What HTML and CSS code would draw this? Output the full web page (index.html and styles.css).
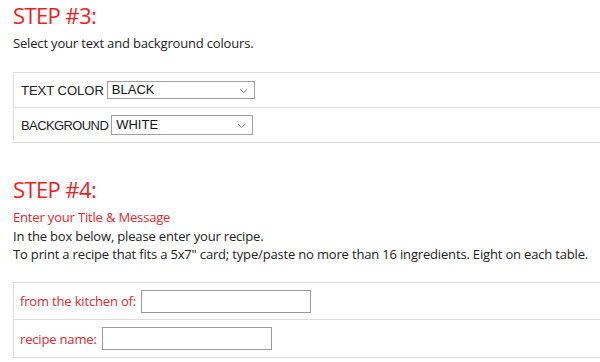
FILE: index.html
```html
<!DOCTYPE html>
<html lang="en">
<head>
    <meta charset="UTF-8">
    <title>Recipe card</title>
    <link rel="stylesheet" href="styles.css">
</head>
<body>
    <!-- Шаг 3: цвета -->
    <h2 class="step-title">STEP #3:</h2>
    <p class="step-text">Select your text and background colours.</p>

    <div class="form-table">
        <div class="form-row colors">
            <label class="field">TEXT COLOR <span class="select-wrap w-text">
                <select>
                    <option>BLACK</option>
                    <option>RED</option>
                    <option>BLUE</option>
                </select>
                <svg class="chevron" width="9" height="6" viewBox="0 0 9 6"><path d="M1 1.2 L4.5 4.5 L8 1.2" fill="none" stroke="#777" stroke-width="1"/></svg>
            </span></label>
        </div>
        <div class="form-row colors">
            <label class="field"><span class="narrow">BACKGROUND</span> <span class="select-wrap w-bg">
                <select>
                    <option>WHITE</option>
                    <option>CREAM</option>
                    <option>GREY</option>
                </select>
                <svg class="chevron" width="9" height="6" viewBox="0 0 9 6"><path d="M1 1.2 L4.5 4.5 L8 1.2" fill="none" stroke="#777" stroke-width="1"/></svg>
            </span></label>
        </div>
    </div>

    <!-- Шаг 4: заголовок и текст -->
    <h2 class="step-title step-four">STEP #4:</h2>
    <p class="step-sub">Enter your Title &amp; Message</p>
    <p class="step-text after-sub">In the box below, please enter your recipe.<br>
    To print a recipe that fits a 5x7" card; type/paste no more than 16 ingredients. Eight on each table.</p>

    <div class="form-table recipe">
        <div class="form-row tall">
            <label class="field red-label">from the kitchen of: <input type="text" class="text-input"></label>
        </div>
        <div class="form-row tall last">
            <label class="field red-label">recipe name: <input type="text" class="text-input"></label>
        </div>
    </div>
</body>
</html>
```

FILE: styles.css
```css
body {
    margin: 0;
    padding: 0 0 0 13px;
    font-family: "Open Sans", Arial, sans-serif;
    color: #222;
    background-color: #fff;
    overflow: hidden;
}

.step-title {
    margin: 0;
    font-size: 22px;
    line-height: 30px;
    font-weight: normal;
    letter-spacing: -0.6px;
    color: #ee1c25;
}

.step-four {
    margin-top: 31px;
}

.step-text {
    margin: 4px 0 0;
    font-size: 13px;
    line-height: 18px;
    letter-spacing: -0.17px;
    white-space: nowrap;
}

.step-text.after-sub {
    margin-top: 1px;
}

.step-sub {
    margin: 4px 0 0;
    font-size: 13px;
    line-height: 18px;
    letter-spacing: -0.17px;
    color: #e3262f;
}

.form-table {
    margin-top: 20px;
    border-left: 1px solid #ddd;
    border-bottom: 1px solid #ddd;
}

.recipe {
    margin-top: 19px;
}

.form-row {
    display: flex;
    align-items: center;
    height: 34px;
    padding-left: 7px;
    border-top: 1px solid #ddd;
}

.form-row.colors {
    font-family: "Liberation Sans", Arial, sans-serif;
    font-size: 13px;
    color: #222;
}

.form-row.tall {
    height: 36px;
    padding-left: 6px;
}

.form-row.tall.last {
    height: 37px;
}

.field {
    display: flex;
    align-items: center;
    gap: 3px;
}

.narrow {
    letter-spacing: -0.6px;
}

.red-label {
    font-size: 13px;
    letter-spacing: -0.17px;
    color: #e3262f;
    gap: 5px;
}

.select-wrap {
    position: relative;
    display: block;
    line-height: 0;
}

.select-wrap select {
    appearance: none;
    -webkit-appearance: none;
    height: 18px;
    margin: 0;
    padding: 0 0 0 4px;
    border: 1px solid #a0a0a0;
    border-radius: 0;
    background: #fff;
    font-family: "Liberation Sans", Arial, sans-serif;
    font-size: 13px;
    line-height: 16px;
    color: #111;
    display: block;
}

.w-text select {
    width: 148px;
}

.w-bg select {
    width: 142px;
    height: 20px;
}

.chevron {
    position: absolute;
    right: 7px;
    top: 50%;
    margin-top: -2px;
}

.text-input {
    width: 170px;
    height: 23px;
    box-sizing: border-box;
    margin: 0;
    padding: 0 4px;
    border: 1px solid #999;
    border-radius: 0;
    font-size: 13px;
}
```
